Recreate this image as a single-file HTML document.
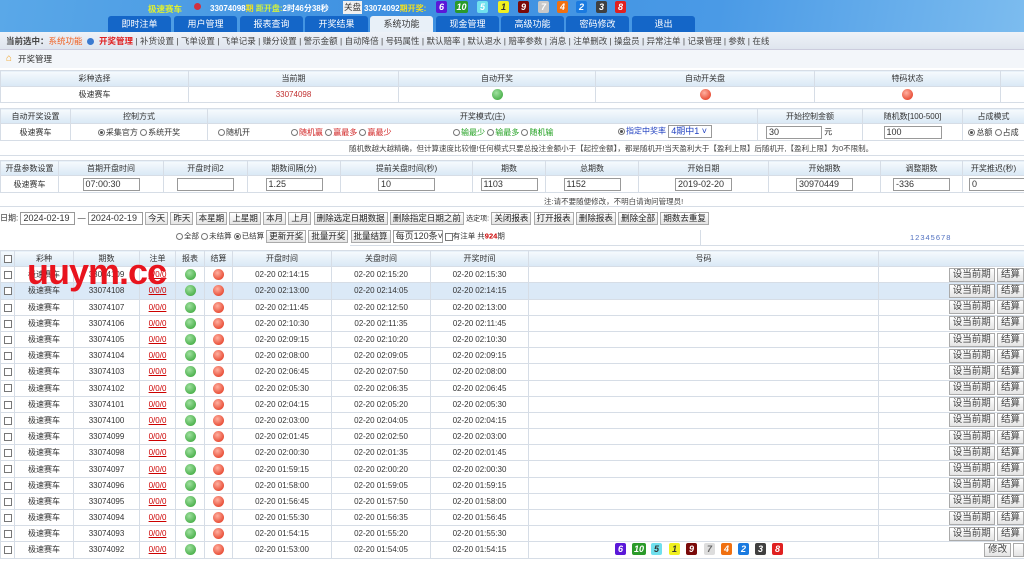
<!DOCTYPE html>
<html><head><meta charset="utf-8">
<style>
*{margin:0;padding:0;box-sizing:border-box}
body{width:1024px;height:568px;overflow:hidden;background:#fff;font-family:"Liberation Sans","Noto Sans CJK SC",sans-serif;font-size:8px;color:#333;position:relative}
.a{position:absolute}
#top{left:0;top:0;width:1024px;height:32px;background:linear-gradient(100deg,#5aa8e8 0%,#3d8fe0 40%,#4a9ae6 70%,#7cbcef 100%)}
.tab{position:absolute;top:16px;height:16px;width:63px;background:#1466c8;color:#fff;font-size:9px;text-align:center;line-height:16px;border-radius:3px 3px 0 0}
.tab.on{background:#e8f0f8;color:#333}
.ball{position:absolute;width:11px;height:12px;border-radius:2px;color:#fff;font-size:9px;font-weight:bold;font-style:italic;text-align:center;line-height:12px}
#sub{left:0;top:32px;width:1024px;height:18px;background:linear-gradient(#eef2f8,#dfe5ee);border-bottom:1px solid #ccd;line-height:18px;font-size:8.5px;padding-left:6px;white-space:nowrap;color:#444}
#bc{left:0;top:50px;width:1024px;height:18px;background:#f3f6fa;line-height:18px;font-size:8.5px;padding-left:18px}
table{border-collapse:collapse;table-layout:fixed;position:absolute;left:0}
td{border:1px solid #d6dde6;text-align:center;overflow:hidden;white-space:nowrap;font-size:8px;padding:0}
tr.h td{background:linear-gradient(#f6fafd,#d9e8f5);color:#333;font-size:8px}
.inp{display:inline-block;border:1px solid #999;background:#fff;height:13px;line-height:11px;text-align:left;padding-left:2px;font-size:9px;vertical-align:middle}
.btn{display:inline-block;border:1px solid #aaa;background:linear-gradient(#fff,#e4e4e4);height:13px;line-height:11px;padding:0 2px;font-size:8.5px;color:#222;vertical-align:middle}
#main .btn{height:14px;line-height:12px;font-size:9.5px;padding:0 3px;color:#444}
.g{display:inline-block;width:11px;height:11px;border-radius:50%;background:radial-gradient(circle at 40% 35%,#9fe09f,#2fa02f);vertical-align:middle}
.r{display:inline-block;width:11px;height:11px;border-radius:50%;background:radial-gradient(circle at 40% 35%,#ffb0a0,#e02a10);vertical-align:middle}
.cb{display:inline-block;width:8px;height:8px;border:1px solid #777;background:#fff;vertical-align:middle}
.rd{display:inline-block;width:7px;height:7px;border:1px solid #777;border-radius:50%;vertical-align:middle;margin-right:1px}
.rd.on{background:radial-gradient(#555 40%,#fff 45%)}
#main td{height:16.2px}
#main tr.alt td{background:#dbe9f7}
.u{color:#c00;text-decoration:underline}
</style></head><body>
<div id="top" class="a">
 <div class="a" style="left:148px;top:3px;color:#e0f030;font-size:8.5px;font-weight:bold">极速赛车</div>
 <div class="a" style="left:194px;top:3px;width:7px;height:7px;border-radius:50%;background:#d03040"></div>
 <div class="a" style="left:210px;top:3px;color:#fff;font-size:8px;font-weight:bold;white-space:nowrap">33074098<span style="color:#f0e020">期</span> <span style="color:#d0f040">距开盘:</span>2时46分38秒</div>
 <div class="a" style="left:343px;top:1px;width:19px;height:13px;background:#f0f0f0;color:#333;font-size:8.5px;line-height:13px;text-align:center">关盘</div>
 <div class="a" style="left:364px;top:3px;color:#fff;font-size:8px;font-weight:bold;white-space:nowrap">33074092<span style="color:#f0e020">期开奖:</span></div>
 <div class="ball" style="left:436px;top:1px;background:#5a18d8">6</div>
 <div class="ball" style="left:455px;top:1px;background:#2a9a2a;width:13px">10</div>
 <div class="ball" style="left:477px;top:1px;background:#70e0ee">5</div>
 <div class="ball" style="left:498px;top:1px;background:#f0f020;color:#333">1</div>
 <div class="ball" style="left:518px;top:1px;background:#7a0a0a">9</div>
 <div class="ball" style="left:538px;top:1px;background:#c8c8c8">7</div>
 <div class="ball" style="left:557px;top:1px;background:#f07010">4</div>
 <div class="ball" style="left:576px;top:1px;background:#1a7ae0">2</div>
 <div class="ball" style="left:596px;top:1px;background:#404040">3</div>
 <div class="ball" style="left:615px;top:1px;background:#e02020">8</div>
 <div class="tab" style="left:108px">即时注单</div>
 <div class="tab" style="left:174px">用户管理</div>
 <div class="tab" style="left:240px">报表查询</div>
 <div class="tab" style="left:305px">开奖结果</div>
 <div class="tab on" style="left:370px">系统功能</div>
 <div class="tab" style="left:436px">现金管理</div>
 <div class="tab" style="left:501px">高级功能</div>
 <div class="tab" style="left:566px">密码修改</div>
 <div class="tab" style="left:632px">退出</div>
</div>
<div id="sub" class="a"><b>当前选中：</b><span style="color:#f06020">系统功能</span> &nbsp;<span style="display:inline-block;width:7px;height:7px;border-radius:50%;background:#3a7ad0;vertical-align:middle"></span>&nbsp; <b style="color:#e02020">开奖管理</b> | 补货设置 | 飞单设置 | 飞单记录 | 赚分设置 | 警示金额 | 自动降倍 | 号码属性 | 默认赔率 | 默认退水 | 赔率参数 | 消息 | 注单删改 | 操盘员 | 异常注单 | 记录管理 | 参数 | 在线</div>
<div id="bc" class="a"><span class="a" style="left:6px;top:0;color:#f0a020;font-size:10px">⌂</span>开奖管理</div>

<table style="top:70px;width:1024px">
<colgroup><col style="width:188px"><col style="width:210px"><col style="width:197px"><col style="width:219px"><col style="width:186px"><col style="width:24px"></colgroup>
<tr class="h" style="height:16px"><td>彩种选择</td><td>当前期</td><td>自动开奖</td><td>自动开关盘</td><td>特码状态</td><td></td></tr>
<tr style="height:16px"><td>极速赛车</td><td style="color:#c03030">33074098</td><td><span class="g"></span></td><td><span class="r"></span></td><td><span class="r"></span></td><td></td></tr>
</table>

<table style="top:108px;width:1024px">
<colgroup><col style="width:70px"><col style="width:137px"><col style="width:550px"><col style="width:105px"><col style="width:100px"><col style="width:62px"></colgroup>
<tr class="h" style="height:15px"><td>自动开奖设置</td><td>控制方式</td><td>开奖模式(庄)</td><td>开始控制金额</td><td>随机数[100-500]</td><td>占成模式</td></tr>
<tr style="height:17px"><td>极速赛车</td><td><span class="rd on"></span>采集官方 <span class="rd"></span>系统开奖</td>
<td style="text-align:left;position:relative"><span class="a" style="left:10px;top:3px"><span class="rd"></span>随机开</span><span class="a" style="left:83px;top:3px;color:#d02020"><span class="rd"></span>随机赢 <span class="rd"></span>赢最多 <span class="rd"></span>赢最少</span><span class="a" style="left:245px;top:3px;color:#20a020"><span class="rd"></span>输最少 <span class="rd"></span>输最多 <span class="rd"></span>随机输</span><span class="a" style="left:410px;top:1px;color:#2040c0"><span class="rd on"></span>指定中奖率 <span class="inp" style="width:44px">4期中1 ˅</span></span></td>
<td style="text-align:left;padding-left:8px"><span class="inp" style="width:56px">30</span> 元</td><td><span class="inp" style="width:58px">100</span></td><td><span class="rd on"></span>总额 <span class="rd"></span>占成</td></tr>
</table>
<div class="a" style="left:349px;top:143px;font-size:7.5px;color:#444">随机数越大越精确，但计算速度比较慢!任何模式只要总投注金额小于【起控金额】，都是随机开!当天盈利大于【盈利上限】后随机开,【盈利上限】为0不限制。</div>
<div class="a" style="left:0;top:155px;width:1024px;border-top:1px solid #d6dde6"></div>

<table style="top:160px;width:1024px">
<colgroup><col style="width:58px"><col style="width:105px"><col style="width:84px"><col style="width:93px"><col style="width:132px"><col style="width:73px"><col style="width:93px"><col style="width:130px"><col style="width:112px"><col style="width:82px"><col style="width:62px"></colgroup>
<tr class="h" style="height:15px"><td>开盘参数设置</td><td>首期开盘时间</td><td>开盘时间2</td><td>期数间隔(分)</td><td>提前关盘时间(秒)</td><td>期数</td><td>总期数</td><td>开始日期</td><td>开始期数</td><td>调整期数</td><td>开奖推迟(秒)</td></tr>
<tr style="height:17px"><td>极速赛车</td><td><span class="inp" style="width:57px">07:00:30</span></td><td><span class="inp" style="width:57px"></span></td><td><span class="inp" style="width:57px">1.25</span></td><td><span class="inp" style="width:57px">10</span></td><td><span class="inp" style="width:57px">1103</span></td><td><span class="inp" style="width:57px">1152</span></td><td><span class="inp" style="width:57px">2019-02-20</span></td><td><span class="inp" style="width:57px">30970449</span></td><td><span class="inp" style="width:57px">-336</span></td><td style="text-align:left;padding-left:6px"><span class="inp" style="width:57px">0</span></td></tr>
</table>
<div class="a" style="left:544px;top:196px;font-size:7.5px;color:#444">注:请不要随便修改，不明白请询问管理员!</div>
<div class="a" style="left:0;top:206px;width:1024px;border-top:1px solid #d6dde6"></div>

<div class="a" style="left:0;top:212px;white-space:nowrap;font-size:8px">日期: <span class="inp" style="width:55px">2024-02-19</span> — <span class="inp" style="width:55px">2024-02-19</span> <span class="btn">今天</span> <span class="btn">昨天</span> <span class="btn">本星期</span> <span class="btn">上星期</span> <span class="btn">本月</span> <span class="btn">上月</span> <span class="btn">删除选定日期数据</span> <span class="btn">删除指定日期之前</span> <span style="font-size:7px">选定项:</span> <span class="btn">关闭报表</span> <span class="btn">打开报表</span> <span class="btn">删除报表</span> <span class="btn">删除全部</span> <span class="btn">期数去重复</span></div>
<div class="a" style="left:176px;top:230px;white-space:nowrap;font-size:7.5px"><span class="rd"></span>全部 <span class="rd"></span>未结算 <span class="rd on"></span>已结算 <span class="btn">更新开奖</span> <span class="btn">批量开奖</span> <span class="btn">批量结算</span> <span class="inp" style="width:50px">每页120条˅</span> <span class="cb"></span>有注单 共<b style="color:#c00">924</b>期</div>
<div class="a" style="left:350px;top:245px;width:674px;border-top:1px solid #d6dde6"></div>
<div class="a" style="left:700px;top:230px;height:15px;border-left:1px solid #d6dde6"></div>
<div class="a" style="left:910px;top:233px;font-size:7.5px;color:#5070c0;letter-spacing:1px">12345678</div>

<table id="main" style="top:250px;width:1024px">
<colgroup><col style="width:14px"><col style="width:59px"><col style="width:66px"><col style="width:36px"><col style="width:29px"><col style="width:28px"><col style="width:99px"><col style="width:99px"><col style="width:98px"><col style="width:350px"><col style="width:146px"></colgroup>
<tr class="h"><td><span class="cb"></span></td><td>彩种</td><td>期数</td><td>注单</td><td>报表</td><td>结算</td><td>开盘时间</td><td>关盘时间</td><td>开奖时间</td><td>号码</td><td></td></tr>
<tr><td><span class="cb"></span></td><td>极速赛车</td><td>33074109</td><td class="u">0/0/0</td><td><span class="g"></span></td><td><span class="r"></span></td><td>02-20 02:14:15</td><td>02-20 02:15:20</td><td>02-20 02:15:30</td><td></td><td style="text-align:right"><span class="btn">设当前期</span> <span class="btn">结算</span></td></tr>
<tr class="alt"><td><span class="cb"></span></td><td>极速赛车</td><td>33074108</td><td class="u">0/0/0</td><td><span class="g"></span></td><td><span class="r"></span></td><td>02-20 02:13:00</td><td>02-20 02:14:05</td><td>02-20 02:14:15</td><td></td><td style="text-align:right"><span class="btn">设当前期</span> <span class="btn">结算</span></td></tr>
<tr><td><span class="cb"></span></td><td>极速赛车</td><td>33074107</td><td class="u">0/0/0</td><td><span class="g"></span></td><td><span class="r"></span></td><td>02-20 02:11:45</td><td>02-20 02:12:50</td><td>02-20 02:13:00</td><td></td><td style="text-align:right"><span class="btn">设当前期</span> <span class="btn">结算</span></td></tr>
<tr><td><span class="cb"></span></td><td>极速赛车</td><td>33074106</td><td class="u">0/0/0</td><td><span class="g"></span></td><td><span class="r"></span></td><td>02-20 02:10:30</td><td>02-20 02:11:35</td><td>02-20 02:11:45</td><td></td><td style="text-align:right"><span class="btn">设当前期</span> <span class="btn">结算</span></td></tr>
<tr><td><span class="cb"></span></td><td>极速赛车</td><td>33074105</td><td class="u">0/0/0</td><td><span class="g"></span></td><td><span class="r"></span></td><td>02-20 02:09:15</td><td>02-20 02:10:20</td><td>02-20 02:10:30</td><td></td><td style="text-align:right"><span class="btn">设当前期</span> <span class="btn">结算</span></td></tr>
<tr><td><span class="cb"></span></td><td>极速赛车</td><td>33074104</td><td class="u">0/0/0</td><td><span class="g"></span></td><td><span class="r"></span></td><td>02-20 02:08:00</td><td>02-20 02:09:05</td><td>02-20 02:09:15</td><td></td><td style="text-align:right"><span class="btn">设当前期</span> <span class="btn">结算</span></td></tr>
<tr><td><span class="cb"></span></td><td>极速赛车</td><td>33074103</td><td class="u">0/0/0</td><td><span class="g"></span></td><td><span class="r"></span></td><td>02-20 02:06:45</td><td>02-20 02:07:50</td><td>02-20 02:08:00</td><td></td><td style="text-align:right"><span class="btn">设当前期</span> <span class="btn">结算</span></td></tr>
<tr><td><span class="cb"></span></td><td>极速赛车</td><td>33074102</td><td class="u">0/0/0</td><td><span class="g"></span></td><td><span class="r"></span></td><td>02-20 02:05:30</td><td>02-20 02:06:35</td><td>02-20 02:06:45</td><td></td><td style="text-align:right"><span class="btn">设当前期</span> <span class="btn">结算</span></td></tr>
<tr><td><span class="cb"></span></td><td>极速赛车</td><td>33074101</td><td class="u">0/0/0</td><td><span class="g"></span></td><td><span class="r"></span></td><td>02-20 02:04:15</td><td>02-20 02:05:20</td><td>02-20 02:05:30</td><td></td><td style="text-align:right"><span class="btn">设当前期</span> <span class="btn">结算</span></td></tr>
<tr><td><span class="cb"></span></td><td>极速赛车</td><td>33074100</td><td class="u">0/0/0</td><td><span class="g"></span></td><td><span class="r"></span></td><td>02-20 02:03:00</td><td>02-20 02:04:05</td><td>02-20 02:04:15</td><td></td><td style="text-align:right"><span class="btn">设当前期</span> <span class="btn">结算</span></td></tr>
<tr><td><span class="cb"></span></td><td>极速赛车</td><td>33074099</td><td class="u">0/0/0</td><td><span class="g"></span></td><td><span class="r"></span></td><td>02-20 02:01:45</td><td>02-20 02:02:50</td><td>02-20 02:03:00</td><td></td><td style="text-align:right"><span class="btn">设当前期</span> <span class="btn">结算</span></td></tr>
<tr><td><span class="cb"></span></td><td>极速赛车</td><td>33074098</td><td class="u">0/0/0</td><td><span class="g"></span></td><td><span class="r"></span></td><td>02-20 02:00:30</td><td>02-20 02:01:35</td><td>02-20 02:01:45</td><td></td><td style="text-align:right"><span class="btn">设当前期</span> <span class="btn">结算</span></td></tr>
<tr><td><span class="cb"></span></td><td>极速赛车</td><td>33074097</td><td class="u">0/0/0</td><td><span class="g"></span></td><td><span class="r"></span></td><td>02-20 01:59:15</td><td>02-20 02:00:20</td><td>02-20 02:00:30</td><td></td><td style="text-align:right"><span class="btn">设当前期</span> <span class="btn">结算</span></td></tr>
<tr><td><span class="cb"></span></td><td>极速赛车</td><td>33074096</td><td class="u">0/0/0</td><td><span class="g"></span></td><td><span class="r"></span></td><td>02-20 01:58:00</td><td>02-20 01:59:05</td><td>02-20 01:59:15</td><td></td><td style="text-align:right"><span class="btn">设当前期</span> <span class="btn">结算</span></td></tr>
<tr><td><span class="cb"></span></td><td>极速赛车</td><td>33074095</td><td class="u">0/0/0</td><td><span class="g"></span></td><td><span class="r"></span></td><td>02-20 01:56:45</td><td>02-20 01:57:50</td><td>02-20 01:58:00</td><td></td><td style="text-align:right"><span class="btn">设当前期</span> <span class="btn">结算</span></td></tr>
<tr><td><span class="cb"></span></td><td>极速赛车</td><td>33074094</td><td class="u">0/0/0</td><td><span class="g"></span></td><td><span class="r"></span></td><td>02-20 01:55:30</td><td>02-20 01:56:35</td><td>02-20 01:56:45</td><td></td><td style="text-align:right"><span class="btn">设当前期</span> <span class="btn">结算</span></td></tr>
<tr><td><span class="cb"></span></td><td>极速赛车</td><td>33074093</td><td class="u">0/0/0</td><td><span class="g"></span></td><td><span class="r"></span></td><td>02-20 01:54:15</td><td>02-20 01:55:20</td><td>02-20 01:55:30</td><td></td><td style="text-align:right"><span class="btn">设当前期</span> <span class="btn">结算</span></td></tr>
<tr><td><span class="cb"></span></td><td>极速赛车</td><td>33074092</td><td class="u">0/0/0</td><td><span class="g"></span></td><td><span class="r"></span></td><td>02-20 01:53:00</td><td>02-20 01:54:05</td><td>02-20 01:54:15</td><td></td><td style="text-align:right"><span class="btn">修改</span> <span class="btn">&nbsp;</span></td></tr>
</table>
<div class="ball" style="left:615px;top:543px;background:#5a18d8">6</div>
<div class="ball" style="left:632px;top:543px;background:#2a9a2a;width:14px">10</div>
<div class="ball" style="left:651px;top:543px;background:#70e0ee;color:#333">5</div>
<div class="ball" style="left:669px;top:543px;background:#f0f020;color:#333">1</div>
<div class="ball" style="left:686px;top:543px;background:#7a0a0a">9</div>
<div class="ball" style="left:704px;top:543px;background:#ddd;color:#666">7</div>
<div class="ball" style="left:721px;top:543px;background:#f07010">4</div>
<div class="ball" style="left:738px;top:543px;background:#1a7ae0">2</div>
<div class="ball" style="left:755px;top:543px;background:#404040">3</div>
<div class="ball" style="left:772px;top:543px;background:#e02020">8</div>
<div class="a" style="left:27px;top:252px;color:#e8141e;font-size:36px;font-weight:bold;letter-spacing:-1px;line-height:40px">uuym.cc</div>
</body></html>
